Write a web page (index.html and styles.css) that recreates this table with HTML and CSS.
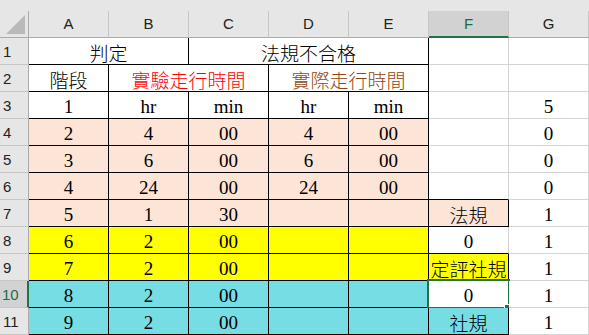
FILE: index.html
```html
<!DOCTYPE html>
<html lang="zh-Hant">
<head>
<meta charset="utf-8">
<title>Sheet</title>
<link rel="stylesheet" href="styles.css">
</head>
<body>
<div class="sheet">
  <div class="strip"></div>

  <div class="corner"><svg class="tri" width="19" height="19" viewBox="0 0 19 19"><polygon points="19,0 19,19 0,19" fill="#b9b9b9"/></svg></div>
  <div class="colh">A</div>
  <div class="colh">B</div>
  <div class="colh">C</div>
  <div class="colh">D</div>
  <div class="colh">E</div>
  <div class="colh sel">F</div>
  <div class="colh">G</div>

  <div class="rowh">1</div>
  <div class="c b s2 cj">判定</div>
  <div class="c b s3 cj">法規不合格</div>
  <div class="c"></div>
  <div class="c"></div>

  <div class="rowh">2</div>
  <div class="c b cj">階段</div>
  <div class="c b s2 cj red">實驗走行時間</div>
  <div class="c b s2 cj brown">實際走行時間</div>
  <div class="c"></div>
  <div class="c"></div>

  <div class="rowh">3</div>
  <div class="c b">1</div>
  <div class="c b">hr</div>
  <div class="c b">min</div>
  <div class="c b">hr</div>
  <div class="c b">min</div>
  <div class="c"></div>
  <div class="c">5</div>

  <div class="rowh">4</div>
  <div class="c b pink">2</div>
  <div class="c b pink">4</div>
  <div class="c b pink">00</div>
  <div class="c b pink">4</div>
  <div class="c b pink">00</div>
  <div class="c"></div>
  <div class="c">0</div>

  <div class="rowh">5</div>
  <div class="c b pink">3</div>
  <div class="c b pink">6</div>
  <div class="c b pink">00</div>
  <div class="c b pink">6</div>
  <div class="c b pink">00</div>
  <div class="c"></div>
  <div class="c">0</div>

  <div class="rowh">6</div>
  <div class="c b pink">4</div>
  <div class="c b pink">24</div>
  <div class="c b pink">00</div>
  <div class="c b pink">24</div>
  <div class="c b pink">00</div>
  <div class="c bb"></div>
  <div class="c">0</div>

  <div class="rowh">7</div>
  <div class="c b pink">5</div>
  <div class="c b pink">1</div>
  <div class="c b pink">30</div>
  <div class="c b pink"></div>
  <div class="c b pink"></div>
  <div class="c b pink cj">法規</div>
  <div class="c">1</div>

  <div class="rowh">8</div>
  <div class="c b yellow">6</div>
  <div class="c b yellow">2</div>
  <div class="c b yellow">00</div>
  <div class="c b yellow"></div>
  <div class="c b yellow"></div>
  <div class="c bb">0</div>
  <div class="c">1</div>

  <div class="rowh">9</div>
  <div class="c b yellow">7</div>
  <div class="c b yellow">2</div>
  <div class="c b yellow">00</div>
  <div class="c b yellow"></div>
  <div class="c b yellow"></div>
  <div class="c b yellow cj">定評社規</div>
  <div class="c">1</div>

  <div class="rowh sel">10</div>
  <div class="c b cyan">8</div>
  <div class="c b cyan">2</div>
  <div class="c b cyan">00</div>
  <div class="c b cyan"></div>
  <div class="c b cyan"></div>
  <div class="c b active">0<span class="selbox"></span><span class="handle"></span></div>
  <div class="c">1</div>

  <div class="rowh">11</div>
  <div class="c b cyan">9</div>
  <div class="c b cyan">2</div>
  <div class="c b cyan">00</div>
  <div class="c b cyan"></div>
  <div class="c b cyan"></div>
  <div class="c b cyan cj">社規</div>
  <div class="c">1</div>
</div>
</body>
</html>
```

FILE: styles.css
```css
html, body {
  margin: 0;
  padding: 0;
  background: #e6e6e6;
}

.sheet {
  display: grid;
  grid-template-columns: 29px repeat(7, 80px);
  grid-template-rows: 11px repeat(12, 27px);
  width: 589px;
  height: 335px;
  overflow: hidden;
}

.strip {
  grid-column: 1 / -1;
  background: #e6e6e6;
}

.corner {
  box-sizing: border-box;
  background: #e6e6e6;
  border-right: 1px solid #ababab;
  border-bottom: 1px solid #ababab;
  display: flex;
  align-items: flex-end;
  justify-content: flex-end;
  padding: 0 3px 3px 0;
}

.tri {
  display: block;
}

.colh {
  box-sizing: border-box;
  background: #e6e6e6;
  border-right: 1px solid #c6c6c6;
  border-bottom: 1px solid #ababab;
  display: flex;
  align-items: center;
  justify-content: center;
  font-family: "Liberation Sans", Arial, sans-serif;
  font-size: 15px;
  color: #222;
  padding-bottom: 1px;
}

.colh.sel {
  background: #d2d2d2;
  border-bottom: 2px solid #217346;
  color: #1d6b47;
  padding-bottom: 0;
}

.rowh {
  box-sizing: border-box;
  background: #e6e6e6;
  border-right: 1px solid #ababab;
  border-bottom: 1px solid #c6c6c6;
  display: flex;
  align-items: center;
  justify-content: flex-start;
  padding-left: 3px;
  font-family: "Liberation Sans", Arial, sans-serif;
  font-size: 15px;
  color: #222;
}

.rowh.sel {
  background: #d2d2d2;
  border-right: 2px solid #217346;
  color: #1d6b47;
  padding-left: 2px;
}

.c {
  position: relative;
  box-sizing: border-box;
  background: #ffffff;
  border-right: 1px solid #d4d4d4;
  border-bottom: 1px solid #d4d4d4;
  display: flex;
  align-items: flex-end;
  justify-content: center;
  font-family: "Liberation Serif", "Noto Sans CJK TC", serif;
  font-size: 19px;
  font-weight: 400;
  line-height: 21px;
  color: #000;
  white-space: nowrap;
  padding-bottom: 1px;
}

.cj {
  font-family: "Noto Sans CJK TC", sans-serif;
  font-weight: 300;
}

.s2 { grid-column: span 2; }
.s3 { grid-column: span 3; }

.b {
  border-right-color: #000;
  border-bottom-color: #000;
}

.bb {
  border-bottom-color: #000;
}

.red { color: #ff0000; }
.brown { color: #8f4612; }

.pink { background: #fce4d6; }
.yellow { background: #ffff00; }
.cyan { background: #77dde4; }

.active {
  background: #ffffff;
}

.selbox {
  position: absolute;
  left: -2px;
  top: -2px;
  width: 83px;
  height: 30px;
  box-sizing: border-box;
  border: 2px solid #217346;
}

.handle {
  position: absolute;
  left: 76px;
  top: 24px;
  width: 6px;
  height: 6px;
  background: #217346;
  box-shadow: -1px -1px 0 #ffffff;
}
```
